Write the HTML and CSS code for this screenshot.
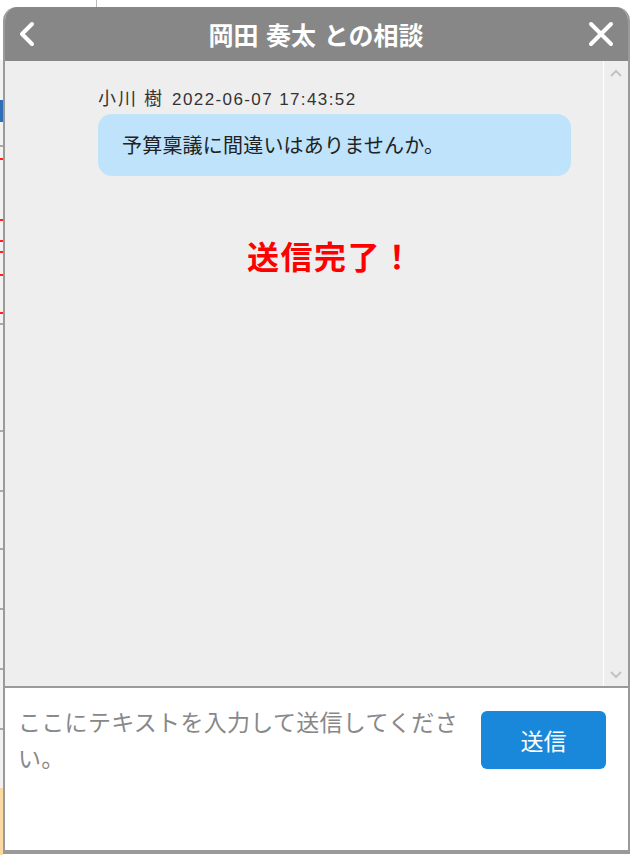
FILE: index.html
```html
<!DOCTYPE html>
<html lang="ja">
<head>
    <meta charset="UTF-8">
    <meta name="viewport" content="width=device-width, initial-scale=1.0">
    <title>岡田 奏太 との相談</title>
    <link rel="stylesheet" href="styles.css">
</head>
<body>
    <!-- 背後のページ -->
    <div class="page">
        <div class="page_line"></div>
        <div class="page_edge">
            <span class="mark blue" style="top: 100px"></span>
            <span class="mark gray" style="top: 145px"></span>
            <span class="mark red" style="top: 158px"></span>
            <span class="mark red" style="top: 219px"></span>
            <span class="mark red" style="top: 240px"></span>
            <span class="mark red" style="top: 251px"></span>
            <span class="mark red" style="top: 274px"></span>
            <span class="mark red" style="top: 312px"></span>
            <span class="mark gray" style="top: 323px"></span>
            <span class="mark gray" style="top: 430px"></span>
            <span class="mark gray" style="top: 490px"></span>
            <span class="mark gray" style="top: 548px"></span>
            <span class="mark gray" style="top: 608px"></span>
            <span class="mark gray" style="top: 668px"></span>
            <span class="mark gray" style="top: 728px"></span>
            <span class="orange"></span>
        </div>
    </div>

    <!-- 相談ウィンドウ -->
    <div class="chat">
        <div class="chat_head">
            <a href="#" class="back">
                <svg width="18" height="26" viewBox="0 0 18 26"><path d="M14 3 L4 13 L14 23" fill="none" stroke="#fff" stroke-width="4" stroke-linecap="round" stroke-linejoin="round"/></svg>
            </a>
            <h2>岡田 奏太 との相談</h2>
            <a href="#" class="close">
                <svg width="26" height="26" viewBox="0 0 26 26"><path d="M3 3 L23 23 M23 3 L3 23" fill="none" stroke="#fff" stroke-width="4" stroke-linecap="round"/></svg>
            </a>
        </div>
        <div class="chat_body">
            <div class="messages">
                <div class="msg">
                    <div class="msg_meta">小川 樹 <span class="time">2022-06-07 17:43:52</span></div>
                    <div class="bubble">予算稟議に間違いはありませんか。</div>
                </div>
                <p class="done">送信完了！</p>
            </div>
            <div class="scrollbar">
                <svg width="14" height="10" viewBox="0 0 14 10"><path d="M2 8 L7 3 L12 8" fill="none" stroke="#c4c4c4" stroke-width="2"/></svg>
                <svg width="14" height="10" viewBox="0 0 14 10"><path d="M2 2 L7 7 L12 2" fill="none" stroke="#c4c4c4" stroke-width="2"/></svg>
            </div>
        </div>
        <div class="chat_input">
            <div class="placeholder">ここにテキストを入力して送信してください。</div>
            <button class="send">送信</button>
        </div>
    </div>
</body>
</html>
```

FILE: styles.css
```css
*{
    box-sizing: border-box;
}
body{
    margin: 0;
    width: 631px;
    height: 855px;
    background-color: #fff;
    font-family: "Noto Sans CJK JP", "Noto Sans", sans-serif;
    overflow: hidden;
    position: relative;
}
/* 背後のページ */
.page{
    position: absolute;
    top: 0;
    left: 0;
    width: 631px;
    height: 855px;
}
.page_line{
    position: absolute;
    top: 0;
    left: 96px;
    width: 1px;
    height: 8px;
    background-color: #bbb;
}
.page_edge{
    position: absolute;
    top: 0;
    left: 0;
    width: 3px;
    height: 855px;
    background: linear-gradient(#fff 60px, #f2f2f2 60px);
}
.mark{
    position: absolute;
    left: 0;
    width: 3px;
    height: 2px;
}
.mark.blue{
    height: 22px;
    background-color: #2f6fb8;
}
.mark.red{
    background-color: #f22;
}
.mark.gray{
    background-color: #aaa;
}
.orange{
    position: absolute;
    left: 0;
    top: 788px;
    width: 3px;
    height: 67px;
    background-color: #fcd9a0;
}

/* 相談ウィンドウ */
.chat{
    position: absolute;
    top: 7px;
    left: 3px;
    width: 627px;
    height: 847px;
    display: flex;
    flex-direction: column;
    border: 2px solid #9a9a9a;
    border-top: none;
    border-radius: 14px 14px 0 0;
    background-color: #fff;
    overflow: hidden;
}
.chat_head{
    height: 54px;
    flex-shrink: 0;
    background-color: #878787;
    display: flex;
    align-items: center;
    justify-content: space-between;
    padding: 0 16px 0 11px;
    margin: 0 -2px;
}
.chat_head h2{
    margin: 0 0 0 4px;
    color: #fff;
    font-size: 25px;
    font-weight: bold;
    word-spacing: 2px;
}
.back, .close{
    display: flex;
    width: 26px;
    height: 26px;
    align-items: center;
    justify-content: center;
}
.chat_body{
    flex: 1;
    display: flex;
    background-color: #eee;
    border-bottom: 2px solid #9a9a9a;
}
.messages{
    flex: 1;
    padding: 23px 0 0 93px;
}
.msg_meta{
    color: #333;
    font-size: 18px;
    line-height: 26px;
    letter-spacing: 2px;
}
.msg_meta .time{
    font-family: "Liberation Sans", "Noto Sans", sans-serif;
    font-size: 17px;
    letter-spacing: 1.4px;
    margin-left: 2px;
}
.bubble{
    width: 473px;
    margin-top: 1px;
    padding: 16px 24px 17px;
    background-color: #bee3fb;
    border-radius: 14px;
    color: #222;
    font-size: 20px;
    line-height: 29px;
    letter-spacing: .2px;
}
.done{
    margin: 58px 0 0 149px;
    color: #f00;
    font-size: 32px;
    font-weight: bold;
    line-height: 42px;
    letter-spacing: 1.5px;
}
.scrollbar{
    width: 25px;
    flex-shrink: 0;
    border-left: 1px solid #fff;
    display: flex;
    flex-direction: column;
    justify-content: space-between;
    align-items: center;
    padding: 7px 0 6px;
}
.chat_input{
    height: 164px;
    flex-shrink: 0;
    display: flex;
    justify-content: space-between;
    align-items: flex-start;
    padding: 15px 22px 0 13px;
    border-bottom: 2px solid #9a9a9a;
}
.placeholder{
    width: 450px;
    color: #888;
    font-size: 23px;
    line-height: 36px;
    letter-spacing: .3px;
}
.send{
    width: 125px;
    height: 58px;
    margin-top: 8px;
    border: 0;
    border-radius: 6px;
    background-color: #1a88da;
    color: #fff;
    font-family: inherit;
    font-size: 23px;
}
```
